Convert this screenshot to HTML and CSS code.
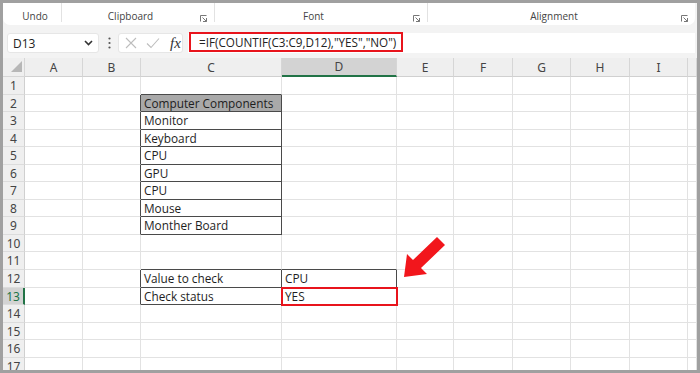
FILE: index.html
```html
<!DOCTYPE html>
<html lang="en">
<head>
  <meta charset="UTF-8">
  <title>COUNTIF check</title>
  <link rel="stylesheet" href="styles.css">
</head>
<body>
  <div class="window">
    <!-- ribbon group labels -->
    <div class="ribbon">
      <div class="grp undo"><span class="lbl">Undo</span></div>
      <div class="grp clip"><span class="lbl">Clipboard</span><span class="launch"><svg width="8" height="8" viewBox="0 0 8 8"><path d="M0.5 6.5V0.5H6.5M2.5 2.5L6.5 6.5M3 6.5H6.5V3" fill="none" stroke="#777" stroke-width="1"/></svg></span></div>
      <div class="grp font"><span class="lbl">Font</span><span class="launch"><svg width="8" height="8" viewBox="0 0 8 8"><path d="M0.5 6.5V0.5H6.5M2.5 2.5L6.5 6.5M3 6.5H6.5V3" fill="none" stroke="#777" stroke-width="1"/></svg></span></div>
      <div class="grp align"><span class="lbl">Alignment</span><span class="launch"><svg width="8" height="8" viewBox="0 0 8 8"><path d="M0.5 6.5V0.5H6.5M2.5 2.5L6.5 6.5M3 6.5H6.5V3" fill="none" stroke="#777" stroke-width="1"/></svg></span></div>
    </div>

    <!-- formula bar -->
    <div class="fbar">
      <div class="namebox">
        <span>D13</span>
        <svg width="9" height="6" viewBox="0 0 9 6"><path d="M1 1L4.5 4.5L8 1" fill="none" stroke="#333" stroke-width="1.6"/></svg>
      </div>
      <svg class="dots" width="3" height="12" viewBox="0 0 3 12"><circle cx="1.5" cy="1.5" r="1.1" fill="#555"/><circle cx="1.5" cy="6" r="1.1" fill="#555"/><circle cx="1.5" cy="10.5" r="1.1" fill="#555"/></svg>
      <div class="fxbox">
        <svg width="12" height="12" viewBox="0 0 12 12"><path d="M1 1L11 11M11 1L1 11" stroke="#bdbdbd" stroke-width="1.1"/></svg>
        <svg width="14" height="12" viewBox="0 0 14 12"><path d="M1 6.5L5 10.5L13 1.5" fill="none" stroke="#bdbdbd" stroke-width="1.1"/></svg>
        <span class="fx">fx</span>
      </div>
      <div class="formula">
        <span class="hl">=IF(COUNTIF(C3:C9,D12),"YES","NO")</span>
      </div>
    </div>

    <!-- worksheet -->
    <div class="sheet">
      <div class="row">
        <div class="corner"><i class="tri"></i></div>
        <div class="ch">A</div><div class="ch">B</div><div class="ch">C</div><div class="ch on">D</div><div class="ch">E</div><div class="ch">F</div><div class="ch">G</div><div class="ch">H</div><div class="ch">I</div><div class="ch"></div>
      </div>
      <div class="row">
        <div class="rh">1</div><div class="c"></div><div class="c"></div><div class="c b"></div><div class="c"></div><div class="c"></div><div class="c"></div><div class="c"></div><div class="c"></div><div class="c"></div><div class="c"></div>
      </div>
      <div class="row">
        <div class="rh">2</div><div class="c"></div><div class="c r"></div><div class="c r b hd">Computer Components</div><div class="c"></div><div class="c"></div><div class="c"></div><div class="c"></div><div class="c"></div><div class="c"></div><div class="c"></div>
      </div>
      <div class="row">
        <div class="rh">3</div><div class="c"></div><div class="c r"></div><div class="c r b">Monitor</div><div class="c"></div><div class="c"></div><div class="c"></div><div class="c"></div><div class="c"></div><div class="c"></div><div class="c"></div>
      </div>
      <div class="row">
        <div class="rh">4</div><div class="c"></div><div class="c r"></div><div class="c r b">Keyboard</div><div class="c"></div><div class="c"></div><div class="c"></div><div class="c"></div><div class="c"></div><div class="c"></div><div class="c"></div>
      </div>
      <div class="row">
        <div class="rh">5</div><div class="c"></div><div class="c r"></div><div class="c r b">CPU</div><div class="c"></div><div class="c"></div><div class="c"></div><div class="c"></div><div class="c"></div><div class="c"></div><div class="c"></div>
      </div>
      <div class="row">
        <div class="rh">6</div><div class="c"></div><div class="c r"></div><div class="c r b">GPU</div><div class="c"></div><div class="c"></div><div class="c"></div><div class="c"></div><div class="c"></div><div class="c"></div><div class="c"></div>
      </div>
      <div class="row">
        <div class="rh">7</div><div class="c"></div><div class="c r"></div><div class="c r b">CPU</div><div class="c"></div><div class="c"></div><div class="c"></div><div class="c"></div><div class="c"></div><div class="c"></div><div class="c"></div>
      </div>
      <div class="row">
        <div class="rh">8</div><div class="c"></div><div class="c r"></div><div class="c r b">Mouse</div><div class="c"></div><div class="c"></div><div class="c"></div><div class="c"></div><div class="c"></div><div class="c"></div><div class="c"></div>
      </div>
      <div class="row">
        <div class="rh">9</div><div class="c"></div><div class="c r"></div><div class="c r b">Monther Board</div><div class="c"></div><div class="c"></div><div class="c"></div><div class="c"></div><div class="c"></div><div class="c"></div><div class="c"></div>
      </div>
      <div class="row">
        <div class="rh">10</div><div class="c"></div><div class="c"></div><div class="c"></div><div class="c"></div><div class="c"></div><div class="c"></div><div class="c"></div><div class="c"></div><div class="c"></div><div class="c"></div>
      </div>
      <div class="row">
        <div class="rh">11</div><div class="c"></div><div class="c"></div><div class="c b"></div><div class="c b"></div><div class="c"></div><div class="c"></div><div class="c"></div><div class="c"></div><div class="c"></div><div class="c"></div>
      </div>
      <div class="row">
        <div class="rh">12</div><div class="c"></div><div class="c r"></div><div class="c r b">Value to check</div><div class="c r b">CPU</div><div class="c"></div><div class="c"></div><div class="c"></div><div class="c"></div><div class="c"></div><div class="c"></div>
      </div>
      <div class="row">
        <div class="rh on">13</div><div class="c"></div><div class="c r"></div><div class="c r b">Check status</div><div class="c r b red">YES</div><div class="c"></div><div class="c"></div><div class="c"></div><div class="c"></div><div class="c"></div><div class="c"></div>
      </div>
      <div class="row">
        <div class="rh">14</div><div class="c"></div><div class="c"></div><div class="c"></div><div class="c"></div><div class="c"></div><div class="c"></div><div class="c"></div><div class="c"></div><div class="c"></div><div class="c"></div>
      </div>
      <div class="row">
        <div class="rh">15</div><div class="c"></div><div class="c"></div><div class="c"></div><div class="c"></div><div class="c"></div><div class="c"></div><div class="c"></div><div class="c"></div><div class="c"></div><div class="c"></div>
      </div>
      <div class="row">
        <div class="rh">16</div><div class="c"></div><div class="c"></div><div class="c"></div><div class="c"></div><div class="c"></div><div class="c"></div><div class="c"></div><div class="c"></div><div class="c"></div><div class="c"></div>
      </div>
      <div class="row">
        <div class="rh">17</div><div class="c"></div><div class="c"></div><div class="c"></div><div class="c"></div><div class="c"></div><div class="c"></div><div class="c"></div><div class="c"></div><div class="c"></div><div class="c"></div>
      </div>
    </div>

    <!-- callout arrow pointing at D13 -->
    <svg class="arrow" width="694" height="367" viewBox="3 3 694 367">
      <polygon points="437,237 445,245 421,268 427,274 404,277 407,254 413,260" fill="#f2161c"/>
    </svg>
  </div>
</body>
</html>
```

FILE: styles.css
```css
body {
  margin: 0;
  font-family: "Open Sans", "Noto Sans", sans-serif;
  color: #222;
}

.window {
  position: relative;
  width: 700px;
  height: 373px;
  box-sizing: border-box;
  border: 3px solid #a0a0a0;
  background: #f3f3f3;
  overflow: hidden;
}

/* ribbon */
.ribbon {
  display: flex;
  height: 22px;
  margin-right: 2px;
  background: #fff;
  border-radius: 0 0 7px 7px;
}

.grp {
  display: flex;
  height: 19px;
  border-right: 1px solid #e2e2e2;
  font-size: 10px;
  color: #444;
}

.grp .lbl {
  flex: 1;
  text-align: center;
  padding-top: 7px;
  line-height: 12px;
}

.undo { width: 59px; padding-left: 6px; box-sizing: border-box; }
.clip { width: 153px; box-sizing: border-box; }
.font { width: 213px; box-sizing: border-box; }
.align { flex: 1; border-right: none; }

.launch {
  width: 15px;
  padding-top: 9px;
  padding-left: 1px;
  box-sizing: border-box;
}

/* formula bar */
.fbar {
  display: flex;
  align-items: center;
  height: 20px;
  margin: 8px 2px 0 4px;
  font-size: 12px;
}

.namebox {
  display: flex;
  align-items: center;
  justify-content: space-between;
  width: 92px;
  height: 20px;
  box-sizing: border-box;
  padding: 0 5px 0 5px;
  background: #fff;
  border: 1px solid #e6e6e6;
  border-radius: 3px;
}

.dots {
  margin: 0 7px 0 9px;
}

.fxbox {
  display: flex;
  align-items: center;
  width: 65px;
  height: 20px;
  box-sizing: border-box;
  padding-left: 6px;
  gap: 9px;
  background: #fff;
  border: 1px solid #e6e6e6;
  border-radius: 3px;
}

.fx {
  font-family: "Liberation Serif", serif;
  font-style: italic;
  font-size: 15px;
  color: #333;
  margin-left: 1px;
}

.formula {
  flex: 1;
  height: 20px;
  margin-left: 5px;
  background: #fff;
}

.formula .hl {
  display: inline-block;
  height: 20px;
  box-sizing: border-box;
  margin: -1px 0 0 1px;
  padding: 0 5px 0 8px;
  line-height: 16px;
  font-size: 11.7px;
  border: 2px solid #e8141c;
  color: #222;
}

/* worksheet grid */
.sheet {
  display: grid;
  grid-template-columns: 22px 58px 58px 141px 115px 57px 59px 58px 59px 58px 9px;
  grid-template-rows: 19px repeat(17, 17.55px);
  margin-top: 5px;
  font-size: 12px;
}

.row {
  display: contents;
}

.corner {
  display: flex;
  align-items: flex-end;
  justify-content: flex-end;
  padding: 0 2px 4px 0;
  background: #efefef;
  border-right: 1px solid #d6d6d6;
  border-bottom: 1px solid #d6d6d6;
}

.tri {
  width: 0;
  height: 0;
  border-left: 11px solid transparent;
  border-bottom: 11px solid #b7b7b7;
}

.ch {
  background: #efefef;
  border-right: 1px solid #d6d6d6;
  border-bottom: 1px solid #d0d0d0;
  text-align: center;
  line-height: 19px;
  color: #444;
  font-family: "Noto Sans", sans-serif;
}

.ch.on {
  background: #d3d3d3;
  border-bottom: 2px solid #217346;
  line-height: 18px;
}

.rh {
  background: #efefef;
  border-right: 1px solid #d0d0d0;
  border-bottom: 1px solid #dcdcdc;
  text-align: center;
  line-height: 17px;
  color: #444;
  font-family: "Noto Sans", sans-serif;
}

.rh.on {
  background: #d3d3d3;
  color: #217346;
  border-right: 2px solid #217346;
}

.c {
  background: #fff;
  border-right: 1px solid #e2e2e2;
  border-bottom: 1px solid #e2e2e2;
  padding: 0 3px;
  line-height: 17px;
  white-space: nowrap;
  font-family: "Open Sans", sans-serif;
  font-size: 11.8px;
  color: #1e1e1e;
}

.c.r { border-right-color: #4a4a4a; }
.c.b { border-bottom-color: #4a4a4a; }

.c.hd {
  background: #a9a9a9;
}

.c.red {
  position: relative;
  z-index: 1;
  outline: 2px solid #e8141c;
  outline-offset: -1px;
}

.arrow {
  position: absolute;
  left: 0;
  top: 0;
  pointer-events: none;
}
```
